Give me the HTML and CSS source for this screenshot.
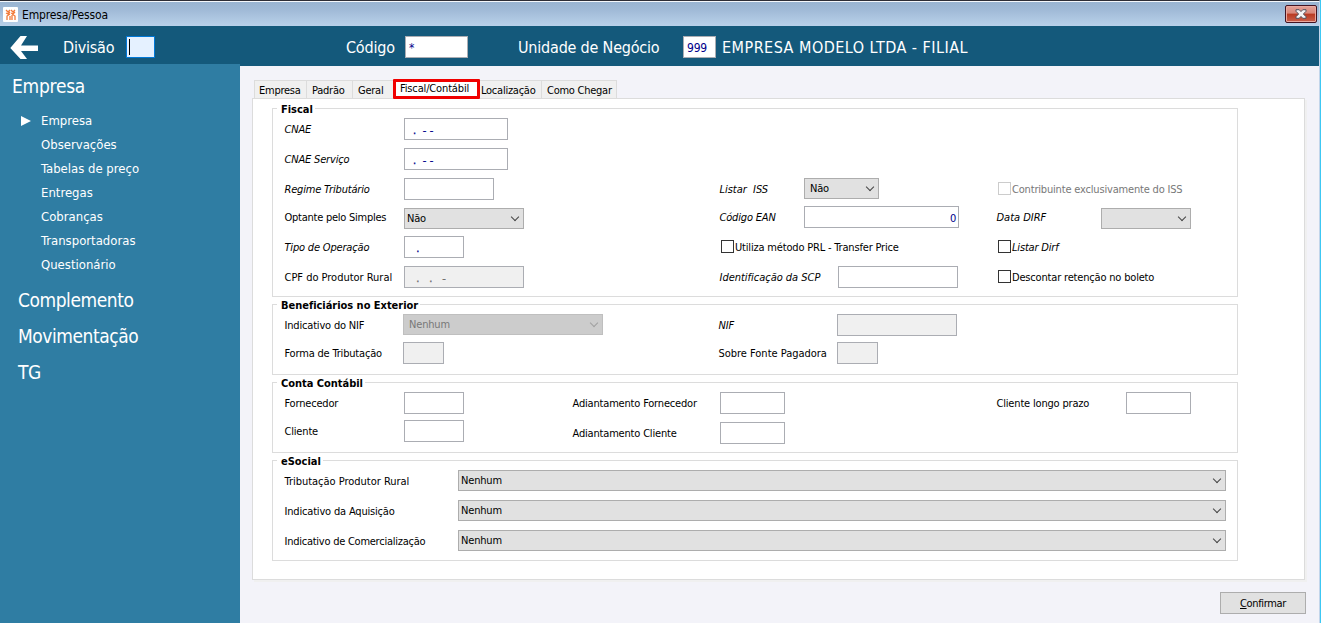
FILE: index.html
```html
<!DOCTYPE html>
<html lang="pt-BR">

<head>
    <meta charset="utf-8">
    <title>Empresa/Pessoa</title>
    <link rel="stylesheet" href="styles.css">
</head>

<body>
    <div class="window">

        <div class="titlebar">
            <svg class="app-icon" width="15" height="15" viewBox="0 0 15 15">
                <rect width="15" height="15" rx="1" fill="#fff" />
                <path d="M3 3l2 2 2-2M8 3l2 2 2-2M3 6l2 1 2-2M8 6l2 1 2-2M4 13V9l3-2M7 13V9M9 13V8M12 13V9l-3-2" fill="none" stroke="#f27a3a" stroke-width="1.3" />
            </svg>
            <span class="title">Empresa/Pessoa</span>
            <button class="close">
                <svg width="12" height="10" viewBox="0 0 12 10">
                    <path d="M1 .7h3.200L6 2.600 7.800 .7H11v1.600L8.400 5 11 7.700v1.600H7.800L6 7.400 4.200 9.300H1V7.700L3.600 5 1 2.300z" fill="#f4f4f6" stroke="#53535f" />
                </svg>
            </button>
        </div>

        <header class="topbar">
            <svg class="back" width="28" height="23" viewBox="0 0 28 23">
                <path d="M10.500 0H17L11 9.500h17v5.500H11L17 23h-6.500L0.300 12z" fill="#fff" />
            </svg>
            <span class="top-label l-div">Divisão</span>
            <span class="top-field focus"><i class="caret"></i></span>
            <span class="top-label l-cod">Código</span>
            <span class="top-field f-cod">*</span>
            <span class="top-label l-uni">Unidade de Negócio</span>
            <span class="top-field f-uni">999</span>
            <span class="top-label l-emp">EMPRESA MODELO LTDA - FILIAL</span>
        </header>

        <div class="main">
            <nav class="sidebar">
                <h2 class="first">Empresa</h2>
                <ul>
                    <li class="selected">Empresa</li>
                    <li>Observações</li>
                    <li>Tabelas de preço</li>
                    <li>Entregas</li>
                    <li>Cobranças</li>
                    <li>Transportadoras</li>
                    <li>Questionário</li>
                </ul>
                <h2>Complemento</h2>
                <h2>Movimentação</h2>
                <h2>TG</h2>
            </nav>

            <div class="content">
                <div class="tabs">
                    <span class="tab t1">Empresa</span>
                    <span class="tab t2">Padrão</span>
                    <span class="tab t3">Geral</span>
                    <span class="tab active">Fiscal/Contábil</span>
                    <span class="tab t5">Localização</span>
                    <span class="tab t6">Como Chegar</span>
                </div>

                <div class="panel">

                    <section class="group g-fiscal">
                        <h3>Fiscal</h3>
                        <div class="row">
                            <label class="c1 it">CNAE</label>
                            <span class="field w104 mask">.&nbsp; - -</span>
                        </div>
                        <div class="row">
                            <label class="c1 it">CNAE Serviço</label>
                            <span class="field w104 mask">.&nbsp; - -</span>
                        </div>
                        <div class="row">
                            <div class="col-a">
                                <label class="c1 it">Regime Tributário</label>
                                <span class="field w90"></span>
                            </div>
                            <div class="col-b">
                                <label class="c85 it loose">Listar&nbsp; ISS</label>
                                <span class="combo w75 pad">Não<i></i></span>
                            </div>
                            <div class="check off"><i></i>Contribuinte exclusivamente do ISS</div>
                        </div>
                        <div class="row up">
                            <div class="col-a">
                                <label class="c1 tight">Optante pelo Simples</label>
                                <span class="combo w120 low">Não<i></i></span>
                            </div>
                            <div class="col-b">
                                <label class="c85 it">Código EAN</label>
                                <span class="field w155 right">0</span>
                            </div>
                            <label class="c105 it loose">Data DIRF</label>
                            <span class="combo w90 low"><i></i></span>
                        </div>
                        <div class="row">
                            <div class="col-a">
                                <label class="c1 it">Tipo de Operação</label>
                                <span class="field w60 mask">&nbsp;.</span>
                            </div>
                            <div class="col-b">
                                <div class="check">
                                    <i></i>Utiliza método PRL - Transfer Price
                                </div>
                            </div>
                            <div class="check it"><i></i>Listar Dirf</div>
                        </div>
                        <div class="row">
                            <div class="col-a">
                                <label class="c1 loose">CPF do Produtor Rural</label>
                                <span class="field w120 mask disabled">&nbsp;.&nbsp;&nbsp; .&nbsp;&nbsp; -</span>
                            </div>
                            <div class="col-b">
                                <label class="c119 it loose">Identificação da SCP</label>
                                <span class="field w120"></span>
                            </div>
                            <div class="check">
                                <i></i>Descontar retenção no boleto
                            </div>
                        </div>
                    </section>

                    <section class="group g-benef">
                        <h3>Beneficiários no Exterior</h3>
                        <div class="row">
                            <div class="col-a">
                                <label class="c119">Indicativo do NIF</label>
                                <span class="combo w200 pad off">Nenhum<i></i></span>
                            </div>
                            <label class="c119 it">NIF</label>
                            <span class="field w120 disabled"></span>
                        </div>
                        <div class="row up">
                            <div class="col-a">
                                <label class="c119">Forma de Tributação</label>
                                <span class="field w41 disabled"></span>
                            </div>
                            <label class="c119 loose">Sobre Fonte Pagadora</label>
                            <span class="field w41 disabled"></span>
                        </div>
                    </section>

                    <section class="group g-conta">
                        <h3>Conta Contábil</h3>
                        <div class="conta">
                            <div class="conta-a">
                                <div class="row">
                                    <label class="c1">Fornecedor</label>
                                    <span class="field w60"></span>
                                </div>
                                <div class="row up">
                                    <label class="c1">Cliente</label>
                                    <span class="field w60"></span>
                                </div>
                            </div>
                            <div class="conta-b">
                                <div class="row">
                                    <label class="c148">Adiantamento Fornecedor</label>
                                    <span class="field w65"></span>
                                </div>
                                <div class="row">
                                    <label class="c148">Adiantamento Cliente</label>
                                    <span class="field w65"></span>
                                </div>
                            </div>
                            <div class="row">
                                <label class="c130">Cliente longo prazo</label>
                                <span class="field w65"></span>
                            </div>
                        </div>
                    </section>

                    <section class="group g-social">
                        <h3>eSocial</h3>
                        <div class="row">
                            <label class="c174 loose">Tributação Produtor Rural</label>
                            <span class="combo wide">Nenhum<i></i></span>
                        </div>
                        <div class="row">
                            <label class="c174">Indicativo da Aquisição</label>
                            <span class="combo wide">Nenhum<i></i></span>
                        </div>
                        <div class="row">
                            <label class="c174 tight">Indicativo de Comercialização</label>
                            <span class="combo wide">Nenhum<i></i></span>
                        </div>
                    </section>

                </div>

                <button class="confirm"><u>C</u>onfirmar</button>
            </div>
        </div>

    </div>
</body>

</html>
```
FILE: styles.css
```css
* {
    box-sizing: border-box;
}

body {
    margin: 0;
    font-family: Tahoma, "DejaVu Sans Condensed", "DejaVu Sans", sans-serif;
    font-stretch: condensed;
    font-size: 11px;
    letter-spacing: -0.18px;
    color: #000;
    background-color: #3cc8f4;
}

.window {
    width: 1320px;
    height: 623px;
    border-top: 1px solid #2d2d35;
    border-right: 1px solid #c3d5ea;
    background-color: #f3f3f9;
    overflow: hidden;
    white-space: nowrap;
}

/* title bar */

.titlebar {
    height: 25px;
    padding: 3px 2px 0 3px;
    border-top: 1px solid #f4f7fb;
    background: linear-gradient(#99b4d1, #9fb9d6 30%, #b9d1ea);
    display: flex;
    align-items: flex-start;
}

.app-icon {
    margin-top: 2px;
}

.title {
    margin-left: 4px;
    flex: 1;
    font-size: 12px;
    line-height: 20px;
    letter-spacing: -0.15px;
}

.close {
    width: 32px;
    height: 18px;
    padding: 0;
    border: 1px solid #431422;
    border-radius: 2px;
    box-shadow: inset 0 0 0 1px #eaa99f;
    background: linear-gradient(#e5a197, #d8877a 45%, #b93a22 50%, #c9614c);
    display: flex;
    align-items: center;
    justify-content: center;
}

/* header */

.topbar {
    height: 40px;
    background-color: #14597b;
    color: #fff;
    display: flex;
    align-items: flex-start;
    padding: 10px 0 0 10px;
}

.top-label {
    font-size: 16px;
    line-height: 23px;
    letter-spacing: -0.2px;
}

.l-div {
    width: 63px;
    margin-left: 25px;
}

.l-cod {
    width: 59px;
    margin-left: 191px;
}

.l-uni {
    width: 165px;
    margin-left: 50px;
}

.l-emp {
    margin-left: 6px;
    letter-spacing: 0.48px;
}

.top-field {
    height: 22px;
    border: 1px solid #abadb3;
    background-color: #fff;
    color: #00008b;
    font-size: 12px;
    line-height: 22px;
    padding-left: 3px;
}

.focus {
    width: 29px;
    border-color: #0078d7;
    background-color: #e5f1ff;
    padding: 2px 0 0 2px;
}

.caret {
    display: block;
    width: 1px;
    height: 16px;
    background-color: #000;
}

.f-cod {
    width: 63px;
}

.f-uni {
    width: 33px;
}

/* sidebar */

.main {
    display: flex;
    height: 557px;
}

.sidebar {
    width: 240px;
    height: 559px;
    margin-top: -2px;
    background-color: #2f7da3;
    color: #fff;
}

.sidebar h2 {
    margin: 0;
    padding-left: 18px;
    font-size: 19px;
    font-weight: normal;
    line-height: 36px;
    letter-spacing: -0.45px;
}

.sidebar .first {
    padding: 4px 0 0 12px;
    letter-spacing: -0.25px;
}

.sidebar ul {
    list-style: none;
    margin: 5px 0;
    padding: 0;
}

.sidebar li {
    padding-left: 41px;
    font-size: 13px;
    line-height: 24px;
    letter-spacing: 0;
}

.sidebar .selected {
    padding-left: 21px;
    display: flex;
    align-items: center;
}

.selected::before {
    content: "";
    border-left: 10px solid #fff;
    border-top: 5px solid transparent;
    border-bottom: 5px solid transparent;
    margin-right: 10px;
}

/* tabs */

.content {
    width: 1079px;
    padding: 12px 14px 0 12px;
}

.tabs {
    height: 20px;
    padding: 2px 0 0 2px;
    display: flex;
    letter-spacing: -0.25px;
}

.tab {
    height: 18px;
    border: 1px solid #dcdcdc;
    border-width: 1px 1px 0 0;
    background-color: #f0f0f0;
    padding-left: 4px;
    line-height: 19px;
}

.t1 {
    width: 53px;
    border-left-width: 1px;
}

.t2 {
    width: 46px;
    padding-left: 5px;
}

.t3 {
    width: 40px;
    padding-left: 5px;
    border-right: none;
}

.active {
    position: relative;
    width: 87px;
    height: 20px;
    margin-top: -1px;
    border: 3px solid #f00000;
    border-radius: 1px;
    background-color: #fff;
    line-height: 13px;
    letter-spacing: -0.15px;
}

.t5 {
    width: 62px;
    padding-left: 1px;
}

.t6 {
    width: 75px;
    padding-left: 5px;
}

/* panel and groups */

.panel {
    height: 482px;
    width: 1053px;
    border: 1px solid #dcdcdc;
    box-shadow: 2px 2px 0 #f0f0f0;
    background-color: #fff;
    padding: 9px 0 0 19px;
}

.group {
    width: 966px;
    margin-bottom: 7px;
    border: 1px solid #dcdcdc;
    padding: 0 0 0 11px;
}

.group h3 {
    margin: -7px 0 1px -7px;
    width: fit-content;
    height: 15px;
    padding: 0 2px 0 4px;
    background-color: #fff;
    font-size: 11px;
    line-height: 16px;
    letter-spacing: -0.03px;
}

.g-fiscal {
    height: 189px;
}

.g-benef,
.g-conta {
    height: 71px;
}

.g-social {
    height: 101px;
}

.row {
    height: 22px;
    margin-bottom: 8px;
    display: flex;
}

.row.up {
    margin-top: -2px;
}

.conta {
    display: flex;
}

.conta-a {
    width: 288px;
}

.conta-b {
    width: 424px;
}

.col-a {
    width: 435px;
    display: flex;
}

.g-benef .col-a {
    width: 434px;
}

.col-b {
    width: 277px;
    display: flex;
}

label,
.check {
    line-height: 24px;
}

label {
    padding-left: 0.5px;
}

.it {
    font-style: italic;
}

.loose {
    letter-spacing: -0.02px;
}

.tight {
    letter-spacing: -0.25px;
}

.c1 { width: 120px; }
.c85 { width: 85px; }
.c105 { width: 105px; }
.c119 { width: 119px; }
.c130 { width: 130px; }
.c148 { width: 148px; }
.c174 { width: 174px; }

.w41 { width: 41px; }
.w60 { width: 60px; }
.w65 { width: 65px; }
.w75 { width: 75px; }
.w90 { width: 90px; }
.w104 { width: 104px; }
.w120 { width: 120px; }
.w155 { width: 155px; }
.w200 { width: 200px; }
.wide { width: 768px; }

.field {
    height: 22px;
    border: 1px solid #abadb3;
    background-color: #fff;
    color: #00008b;
    line-height: 23px;
}

.mask {
    padding-left: 8px;
    letter-spacing: 0.1px;
    -webkit-text-stroke: 0.3px;
}

.right {
    text-align: right;
    padding-right: 2px;
}

.disabled {
    background-color: #f0f0f0;
    color: #6d6d6d;
}

.combo {
    height: 21px;
    border: 1px solid #adadad;
    background-color: #e1e1e1;
    padding: 1px 4px 0 2px;
    line-height: 20px;
    display: flex;
    align-items: center;
}

.combo.pad {
    padding-left: 5px;
}

.combo.low {
    margin-top: 2px;
}

.combo i {
    width: 6px;
    height: 6px;
    margin: -4px 1px 0 auto;
    border: 1px solid #444;
    border-width: 0 1px 1px 0;
    transform: rotate(45deg);
}

.combo.off {
    background-color: #ccc;
    border-color: #bfbfbf;
    color: #787878;
}

.combo.off i {
    border-color: #a0a0a0;
}

.check {
    display: flex;
    padding-left: 2px;
}

.check i {
    width: 13px;
    height: 13px;
    margin: 4px 1px 0 0;
    border: 1px solid #333;
    background-color: #fff;
}

.check.off {
    color: #787878;
}

.check.off i {
    border-color: #ccc;
}

.confirm {
    display: block;
    width: 86px;
    height: 22px;
    margin: 12px 0 0 968px;
    padding: 0;
    border: 1px solid #adadad;
    background-color: #e1e1e1;
    font: inherit;
    letter-spacing: -0.35px;
}
```
